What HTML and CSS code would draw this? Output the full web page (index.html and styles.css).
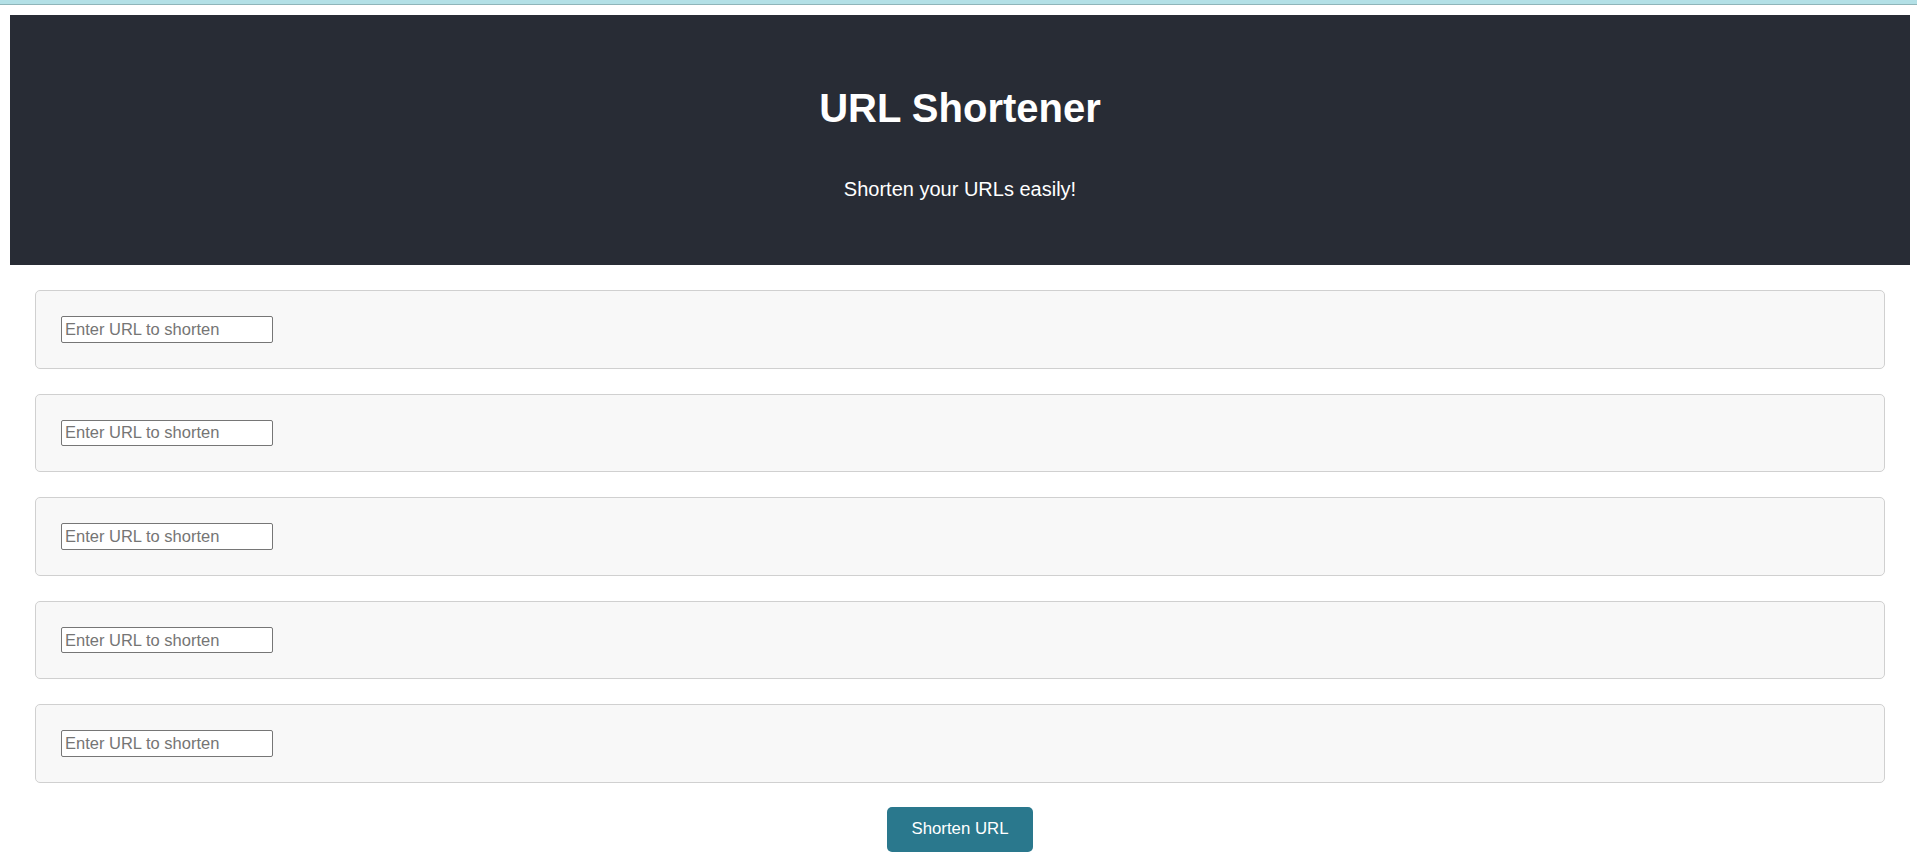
FILE: index.html
```html
<!DOCTYPE html>
<html lang="en">
<head>
<meta charset="utf-8">
<title>URL Shortener</title>
<link rel="stylesheet" href="styles.css">
</head>
<body>
<div class="topstrip"></div>
<div class="page">
  <header class="hero">
    <h1 class="hero-title">URL Shortener</h1>
    <p class="hero-sub">Shorten your URLs easily!</p>
  </header>
  <main class="form">
    <div class="card"><input class="url-input" type="text" placeholder="Enter URL to shorten"></div>
    <div class="card"><input class="url-input" type="text" placeholder="Enter URL to shorten"></div>
    <div class="card"><input class="url-input" type="text" placeholder="Enter URL to shorten"></div>
    <div class="card"><input class="url-input" type="text" placeholder="Enter URL to shorten"></div>
    <div class="card"><input class="url-input" type="text" placeholder="Enter URL to shorten"></div>
    <div class="actions"><button class="btn" type="button">Shorten URL</button></div>
  </main>
</div>
</body>
</html>
```
FILE: styles.css
```css
html, body {
  margin: 0;
  padding: 0;
  background: #ffffff;
  font-family: "Liberation Sans", Arial, sans-serif;
  overflow: hidden;
}

.topstrip {
  height: 4px;
  background: #b3e0e6;
  border-bottom: 1px solid #8fb5b9;
}

.page {
  width: 1900px;
  padding: 10px 0 0 10px;
}

.hero {
  height: 250px;
  box-sizing: border-box;
  background: #282c35;
  color: #ffffff;
  text-align: center;
  padding-top: 70px;
}

.hero-title {
  margin: 0;
  font-size: 40px;
  font-weight: bold;
  line-height: 46px;
}

.hero-sub {
  margin: 46.6px 0 0;
  font-size: 20px;
  line-height: 23px;
}

.form {
  padding: 25px 25px 0;
  display: flex;
  flex-direction: column;
  gap: 25px;
}

.card {
  background: #f8f8f8;
  border: 1px solid #d0d0d0;
  border-radius: 5px;
  padding: 25px;
}

.url-input {
  display: block;
  box-sizing: border-box;
  width: 212px;
  height: 26.6px;
  margin: 0;
  padding: 1px 3px;
  border: 1px solid #767676;
  border-radius: 2px;
  background: #ffffff;
  font-family: "Liberation Sans", Arial, sans-serif;
  font-size: 16.5px;
  color: #333;
}

.url-input::placeholder {
  color: #757575;
}

.actions {
  display: flex;
  justify-content: center;
  margin-top: -1px;
}

.btn {
  box-sizing: border-box;
  width: 146px;
  height: 45px;
  border: none;
  border-radius: 5px;
  background: #2a788d;
  color: #ffffff;
  font-family: "Liberation Sans", Arial, sans-serif;
  font-size: 16.8px;
  padding: 0;
}
```
